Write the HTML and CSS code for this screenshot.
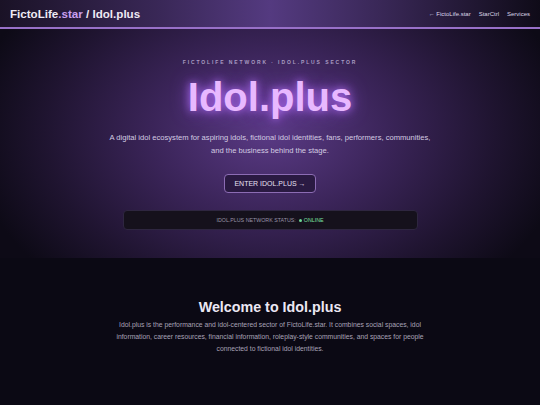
FILE: index.html
```html
<!DOCTYPE html>
<html lang="en">
<head>
    <meta charset="UTF-8">
    <meta name="viewport" content="width=device-width, initial-scale=1.0">
    <title>Idol.plus</title>
    <link rel="stylesheet" href="styles.css">
</head>
<body>

<header class="topbar">
    <div class="brand">FictoLife<span class="accent">.star</span> / Idol.plus</div>
    <nav class="nav">
        <a href="#">&larr; FictoLife.star</a>
        <a href="#">StarCtrl</a>
        <a href="#">Services</a>
    </nav>
</header>

<section class="hero">
    <p class="eyebrow">FictoLife Network &middot; Idol.plus Sector</p>
    <h1 class="hero-title">Idol.plus</h1>
    <p class="hero-text">A digital idol ecosystem for aspiring idols, fictional idol identities, fans, performers, communities,<br>and the business behind the stage.</p>
    <a class="enter-btn" href="#">ENTER IDOL.PLUS &rarr;</a>
    <div class="status">
        <span class="status-label">IDOL.PLUS NETWORK STATUS:</span>
        <span class="status-online"><span class="dot"></span>ONLINE</span>
    </div>
</section>

<section class="welcome">
    <h2>Welcome to Idol.plus</h2>
    <p>Idol.plus is the performance and idol-centered sector of FictoLife.star. It combines social spaces, idol information, career resources, financial information, roleplay-style communities, and spaces for people connected to fictional idol identities.</p>
</section>

</body>
</html>
```

FILE: styles.css
```css
body {
    margin: 0;
    background: #0b0914;
    font-family: "Liberation Sans", Arial, sans-serif;
    color: #e8e4f0;
}
a {
    text-decoration: none;
    color: inherit;
}
.topbar {
    height: 27px;
    display: flex;
    align-items: center;
    justify-content: space-between;
    padding: 0 10px;
    background: linear-gradient(90deg, #1a1226 0%, #3a2858 30%, #543a80 50%, #3a2858 70%, #0f0b18 100%);
    border-bottom: 2px solid #9870c8;
}
.brand {
    font-size: 11.6px;
    font-weight: bold;
    color: #eeeaf4;
}
.accent {
    color: #c9a0f0;
}
.nav {
    display: flex;
    gap: 8px;
    font-size: 6px;
}
.nav a {
    color: #dcd6e8;
}
.hero {
    height: 229px;
    display: flex;
    flex-direction: column;
    align-items: center;
    background: radial-gradient(ellipse 300px 210px at 50% 45%, #5a3a85 0%, #3a2458 40%, #1f1430 75%, #0d0a16 100%);
    text-align: center;
}
.eyebrow {
    margin: 30px 0 0;
    font-size: 5px;
    letter-spacing: 1.9px;
    text-transform: uppercase;
    font-weight: bold;
    color: #a99cc2;
}
.hero-title {
    margin: 8px 0 0;
    font-size: 40px;
    line-height: 48px;
    font-weight: bold;
    color: #e8b8ff;
    text-shadow: 0 0 8px #b070f0, 0 0 18px #8a48d0;
}
.hero-text {
    margin: 10px 0 0;
    font-size: 7.6px;
    line-height: 13px;
    color: #d4cce2;
}
.enter-btn {
    margin-top: 17px;
    padding: 5px 9px;
    font-size: 7px;
    color: #e6e0f2;
    background: #2a1a42;
    border: 1px solid #8c6cb4;
    border-radius: 4px;
}
.status {
    margin-top: 17px;
    width: 293px;
    height: 18px;
    display: flex;
    align-items: center;
    justify-content: center;
    gap: 3px;
    font-size: 5.3px;
    background: #15111c;
    border: 1px solid #2e2640;
    border-radius: 4px;
}
.status-label {
    color: #9a94a8;
}
.status-online {
    color: #7ee0a2;
    display: flex;
    align-items: center;
    gap: 2px;
}
.dot {
    width: 3px;
    height: 3px;
    border-radius: 50%;
    background: #6ed894;
}
.welcome {
    text-align: center;
    padding: 41px 114px 0;
}
.welcome h2 {
    margin: 0;
    font-size: 14.3px;
    color: #ebe7f3;
}
.welcome p {
    margin: 4px 0 0;
    font-size: 6.8px;
    line-height: 12px;
    color: #a8a2b6;
}
```
